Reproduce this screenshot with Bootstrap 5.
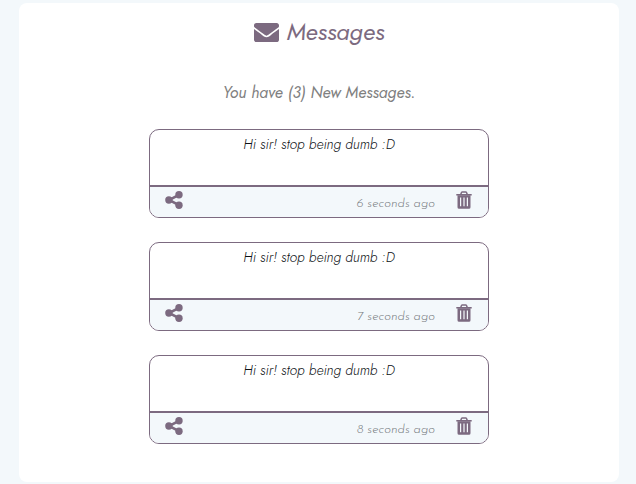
<!DOCTYPE html>
<html lang="en">
<head>
<meta charset="utf-8">
<meta name="viewport" content="width=device-width, initial-scale=1">
<title>Messages</title>
<link href="https://cdn.jsdelivr.net/npm/bootstrap@5.3.0/dist/css/bootstrap.min.css" rel="stylesheet">
<style>
:root { --plum: #7c6a80; --mist: #f3f8fb; }
body { background: var(--mist); font-family: Jost, "Josefin Sans", Lato, sans-serif; padding: 3px 17px 2px 19px; }
.inbox { max-width: 600px; border-radius: 8px; padding: 14px 16px 38px; }
.inbox-title { color: var(--plum); font-size: 24px; line-height: 30px; font-weight: 400; gap: 8px; margin-bottom: 32px; }
.inbox-count { color: #808080; font-size: 16px; line-height: 28px; font-weight: 400; margin-bottom: 22px; }
.message-list { max-width: 340px; gap: 24px; }
.message { border: 1px solid var(--plum); border-radius: 10px; overflow: hidden; }
.message-text { min-height: 55px; padding: 4px 16px; font-size: 14px; line-height: 20px; font-weight: 300; color: #0c1014; }
.message-bar { background: var(--mist); border-top: 2px solid var(--plum); padding: 0 15px; height: 32px; }
.message-time { font-family: "Josefin Sans", Lato, sans-serif; color: #74787c; font-size: 13px; line-height: 16px; font-weight: 300; margin: 3px 20px 0 auto; }
.icon-btn { color: var(--plum); padding: 0 0 4px; border: 0; line-height: 0; }
</style>
<script src="https://cdn.jsdelivr.net/npm/bootstrap@5.3.0/dist/js/bootstrap.bundle.min.js" defer></script>
</head>
<body>
<svg class="d-none" aria-hidden="true">
  <symbol id="share" viewBox="0 0 18 18">
    <path d="M14 3.8L4 9l10 5.2" fill="none" stroke="currentColor" stroke-width="2.6"/>
    <g fill="currentColor"><circle cx="14" cy="3.8" r="3.7"/><circle cx="3.9" cy="9" r="3.7"/><circle cx="14" cy="14.2" r="3.7"/></g>
  </symbol>
  <symbol id="trash" viewBox="0 0 16 18">
    <path d="M4.8 3.2L5.6 1.3Q5.8.9 6.3.9h3.4q.5 0 .7.4l.8 1.9" fill="none" stroke="currentColor" stroke-width="1.5"/>
    <path d="M.7 2.9h14.6q.5 0 .5.5v.7q0 .5-.5.5H.7q-.5 0-.5-.5v-.7q0-.5.5-.5z" fill="currentColor"/>
    <path fill-rule="evenodd" d="M1.5 4.3h13v11.9q0 1.6-1.6 1.6H3.1q-1.6 0-1.6-1.6zM4 6.5v8.800h1.200V6.500zM7.400 6.500v8.800h1.200V6.500zM10.800 6.500v8.800h1.200V6.500z" fill="currentColor"/>
  </symbol>
</svg>

<main class="inbox bg-white mx-auto">
  <h1 class="inbox-title d-flex justify-content-center align-items-center fst-italic">
    <svg width="25" height="19" viewBox="0 64 512 384" preserveAspectRatio="none" fill="currentColor" aria-hidden="true"><path d="M502.3 190.8c3.9-3.1 9.7-.2 9.7 4.7V400c0 26.500-21.500 48-48 48H48c-26.500 0-48-21.500-48-48V195.600c0-5 5.700-7.800 9.700-4.700 22.400 17.400 52.100 39.500 154.100 113.600 21.100 15.400 56.700 47.800 92.200 47.600 35.700.3 72-32.800 92.300-47.600 102-74.100 131.600-96.300 154-113.700zM256 320c23.200.4 56.600-29.200 73.400-41.400 132.700-96.300 142.800-104.700 173.400-128.700 5.800-4.500 9.200-11.500 9.200-18.900v-19c0-26.500-21.500-48-48-48H48c-26.500 0-48 21.500-48 48v19c0 7.400 3.400 14.300 9.200 18.900 30.600 23.900 40.700 32.400 173.400 128.700 16.800 12.200 50.200 41.800 73.400 41.400z"/></svg>
    <span>Messages</span>
  </h1>
  <p class="inbox-count text-center fst-italic">You have (3) New Messages.</p>

  <section class="message-list d-flex flex-column mx-auto" aria-label="New messages">
    <article class="message bg-white">
      <div class="message-text text-center fst-italic">Hi sir! stop being dumb :D</div>
      <div class="message-bar d-flex align-items-center">
        <button type="button" class="btn icon-btn" aria-label="Share"><svg width="18" height="18" aria-hidden="true"><use href="#share"/></svg></button>
        <span class="message-time fst-italic">6 seconds ago</span>
        <button type="button" class="btn icon-btn" aria-label="Delete"><svg width="18" height="18" aria-hidden="true"><use href="#trash"/></svg></button>
      </div>
    </article>
    <article class="message bg-white">
      <div class="message-text text-center fst-italic">Hi sir! stop being dumb :D</div>
      <div class="message-bar d-flex align-items-center">
        <button type="button" class="btn icon-btn" aria-label="Share"><svg width="18" height="18" aria-hidden="true"><use href="#share"/></svg></button>
        <span class="message-time fst-italic">7 seconds ago</span>
        <button type="button" class="btn icon-btn" aria-label="Delete"><svg width="18" height="18" aria-hidden="true"><use href="#trash"/></svg></button>
      </div>
    </article>
    <article class="message bg-white">
      <div class="message-text text-center fst-italic">Hi sir! stop being dumb :D</div>
      <div class="message-bar d-flex align-items-center">
        <button type="button" class="btn icon-btn" aria-label="Share"><svg width="18" height="18" aria-hidden="true"><use href="#share"/></svg></button>
        <span class="message-time fst-italic">8 seconds ago</span>
        <button type="button" class="btn icon-btn" aria-label="Delete"><svg width="18" height="18" aria-hidden="true"><use href="#trash"/></svg></button>
      </div>
    </article>
  </section>
</main>
</body>
</html>
